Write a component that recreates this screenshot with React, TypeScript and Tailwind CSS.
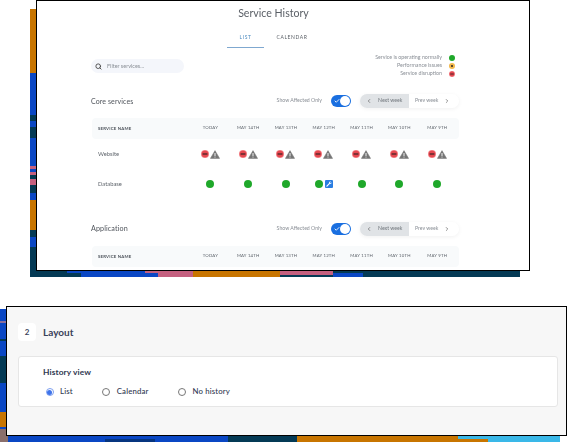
import { Check, ChevronLeft, ChevronRight, Search } from "lucide-react";

const days = ["TODAY", "MAY 14TH", "MAY 13TH", "MAY 12TH", "MAY 11TH", "MAY 10TH", "MAY 9TH"];

const gridCols = "ml-[1px] grid grid-cols-[99.5px_repeat(7,37.8px)]";

function Disrupted({ size = 8 }: { size?: number }) {
  return (
    <svg width={size} height={size} viewBox="0 0 8 8" className="shrink-0">
      <circle cx="4" cy="4" r="4" fill="#f27f85" />
      <circle cx="4" cy="4" r="3.2" fill="#e5474f" />
      <rect x="1.6" y="3.5" width="4.8" height="1" fill="#1c1c1c" />
    </svg>
  );
}

function Warning() {
  return (
    <svg width="10" height="9" viewBox="0 0 10 9" className="shrink-0">
      <path d="M5 .6 9.6 8.4H.4Z" fill="#757575" stroke="#757575" strokeWidth=".5" strokeLinejoin="round" />
      <rect x="4.55" y="3" width=".9" height="3" fill="#fff" />
      <rect x="4.55" y="6.6" width=".9" height=".9" fill="#fff" />
    </svg>
  );
}

function Healthy() {
  return <span className="block h-2 w-2 shrink-0 rounded-full bg-[#1fa82a]" />;
}

function Maintenance() {
  return (
    <svg width="8" height="8" viewBox="0 0 8 8" className="shrink-0">
      <rect width="8" height="8" rx="1" fill="#2a7de1" />
      <path d="M1.9 6.1 4.6 3.4" stroke="#fff" strokeWidth="1.2" strokeLinecap="round" />
      <path d="M4 2.9A1.5 1.5 0 0 1 5.9 1.6L4.9 2.7 5.4 3.2 6.5 2.2A1.5 1.5 0 0 1 5.2 4.1Z" fill="#fff" />
    </svg>
  );
}

function Controls() {
  return (
    <div className="flex items-center">
      <span className="text-[5.2px] text-[#8a8f96]">Show Affected Only</span>
      <span className="ml-[9px] flex h-3 w-5 items-center justify-between rounded-full bg-[#1a6fe0] pl-[3px] pr-[1px]">
        <Check size={6} color="#fff" strokeWidth={3.5} />
        <span className="h-[10px] w-[10px] rounded-full bg-white" />
      </span>
      <div className="ml-[9px] flex h-[14px] w-[99px] rounded-full bg-white shadow-[0_1px_4px_rgba(0,0,0,0.06)]">
        <div className="flex w-[49px] items-center rounded-l-full bg-[#e0e3e6] pl-[6px] text-[5.2px] text-[#71777d]">
          <ChevronLeft size={6} color="#555" strokeWidth={2.5} />
          <span className="ml-[6px]">Next week</span>
        </div>
        <div className="flex flex-1 items-center pl-[6px] text-[5.2px] text-[#8a8f96]">
          <span>Prev week</span>
          <ChevronRight size={6} color="#555" strokeWidth={2.5} className="ml-[6px]" />
        </div>
      </div>
    </div>
  );
}

function TableHead() {
  return (
    <div className={`${gridCols} h-[21px] items-center rounded-sm bg-[#f8fafb] text-[4.3px] tracking-[0.2px] text-[#5d636b]`}>
      <span className="pl-[6px] pt-[1px] font-bold text-[#4c525a]">SERVICE NAME</span>
      {days.map((d) => (
        <span key={d} className="text-center">
          {d}
        </span>
      ))}
    </div>
  );
}

function TableRow({ name, cell }: { name: string; cell: (i: number) => React.ReactNode }) {
  return (
    <div className={`${gridCols} h-[30px] items-center`}>
      <span className="pl-[6px] text-[5.8px] text-[#5f656c]">{name}</span>
      {days.map((d, i) => (
        <div key={d} className="flex items-center justify-center">
          {cell(i)}
        </div>
      ))}
    </div>
  );
}

function Radio({ label, checked }: { label: string; checked?: boolean }) {
  return (
    <label className="flex items-center gap-[6.5px]">
      <span
        className={`flex h-2 w-2 items-center justify-center rounded-full border-[0.8px] bg-white ${
          checked ? "border-[#7d9ff0]" : "border-[#777]"
        }`}
      >
        {checked && <span className="h-[5px] w-[5px] rounded-full bg-[#3f74ea]" />}
      </span>
      <span className="text-[7.8px] font-medium tracking-[0.15px] text-[#2f3850]">{label}</span>
    </label>
  );
}

function TopArt() {
  return (
    <svg className="absolute inset-0" width="490" height="268" viewBox="0 0 490 268" shapeRendering="crispEdges">
      <rect width="490" height="268" fill="#043a55" />
      <rect y="0" width="8" height="64" fill="#c87500" />
      <rect y="64" width="8" height="42" fill="#0a47c4" />
      <rect y="112" width="8" height="6" fill="#0a47c4" />
      <rect y="129" width="8" height="37" fill="#0a47c4" />
      <rect y="157" width="8" height="3" fill="#c4607f" />
      <rect y="163" width="8" height="3" fill="#c4607f" />
      <rect y="170" width="8" height="6" fill="#c4607f" />
      <rect y="184" width="8" height="7" fill="#0a47c4" />
      <rect y="191" width="8" height="30" fill="#c87500" />
      <rect y="228" width="8" height="10" fill="#0a47c4" />
      <rect x="37" y="260" width="14" height="4" fill="#0a47c4" />
      <rect x="51" y="260" width="77" height="8" fill="#0a47c4" />
      <rect x="115" y="260" width="48" height="4" fill="#c4607f" />
      <rect x="128" y="264" width="35" height="4" fill="#c4607f" />
      <rect x="163" y="260" width="87" height="8" fill="#c87500" />
      <rect x="250" y="260" width="53" height="6" fill="#c4607f" />
      <rect x="303" y="264" width="30" height="4" fill="#0a47c4" />
    </svg>
  );
}

function BottomArt() {
  return (
    <svg className="absolute inset-0" width="560" height="133" viewBox="0 0 560 133" shapeRendering="crispEdges">
      <rect width="560" height="133" fill="#0a47c4" />
      <rect y="47" width="8" height="27" fill="#043a55" />
      <rect y="12" width="8" height="2" fill="#8a6f9c" />
      <rect y="30" width="8" height="2" fill="#043a55" />
      <rect y="103" width="8" height="15" fill="#c87500" />
      <rect y="120" width="8" height="13" fill="#8a6f6c" />
      <rect x="105" y="130" width="50" height="3" fill="#06357f" />
      <rect x="228" y="127" width="69" height="6" fill="#043a55" />
      <rect x="297" y="127" width="191" height="6" fill="#c87500" />
      <rect x="458" y="127" width="102" height="3" fill="#3ab8e8" />
      <rect x="488" y="127" width="72" height="6" fill="#3ab8e8" />
    </svg>
  );
}

export default function App() {
  return (
    <div className="relative h-[442px] w-[567px] overflow-hidden bg-white font-['Lato',sans-serif]">
      <div className="relative ml-[30px] mt-[9px] h-[268px] w-[490px]">
        <TopArt />
        <div className="absolute left-[6px] top-[-9px] h-[271px] w-[494px] overflow-hidden border border-black bg-white">
          <div className="ml-[54px] w-[368px] blur-[0.25px]">
            <h1 className="mt-[5px] pr-[3px] text-center text-[10.6px] leading-[15px] text-[#5a5f66]">Service History</h1>
            <div className="mt-[6px] flex justify-center pr-[3px] text-center text-[5px] tracking-[0.6px]">
              <div className="h-[21px] w-[37px] border-b-[1.5px] border-[#7fa8d0] pt-[6px] leading-[8px] text-[#4f8cc0]">LIST</div>
              <div className="h-[21px] w-[56px] pt-[6px] leading-[8px] text-[#5a5f66]">CALENDAR</div>
            </div>
            <div className="mt-[6px] flex justify-between">
              <div className="mt-[5px] flex h-[14px] w-[93px] items-center rounded-full bg-[#f4f6fb] pl-[4px]">
                <Search size={7} color="#444" strokeWidth={3} />
                <span className="ml-[5px] text-[5.5px] text-[#8a8f96]">Filter services...</span>
              </div>
              <div className="pr-[4px] text-[5.3px] text-[#8a8f96]">
                <div className="flex h-2 items-center justify-end gap-[7px]">
                  Service is operating normally
                  <span className="h-[6px] w-[6px] rounded-full bg-[#1fa82a]" />
                </div>
                <div className="flex h-2 items-center justify-end gap-[7px]">
                  Performance issues
                  <span className="flex h-[6px] w-[6px] items-center justify-center rounded-full bg-[#f2b84b]">
                    <span className="h-[2px] w-[2px] rounded-full bg-[#222]" />
                  </span>
                </div>
                <div className="flex h-2 items-center justify-end gap-[7px]">
                  Service disruption
                  <Disrupted size={6} />
                </div>
              </div>
            </div>

            <div className="mt-[16px] flex h-[14px] items-center justify-between">
              <span className="text-[7px] tracking-[0.1px] text-[#50555c]">Core services</span>
              <Controls />
            </div>
            <div className="mt-[10px]">
              <TableHead />
              <TableRow
                name="Website"
                cell={() => (
                  <div className="flex items-center gap-[1px]">
                    <Disrupted />
                    <Warning />
                  </div>
                )}
              />
              <TableRow
                name="Database"
                cell={(i) =>
                  i === 3 ? (
                    <div className="flex items-center gap-[2px]">
                      <Healthy />
                      <Maintenance />
                    </div>
                  ) : (
                    <Healthy />
                  )
                }
              />
            </div>

            <div className="mt-[23px] flex h-[14px] items-center justify-between">
              <span className="text-[7.2px] tracking-[0.1px] text-[#50555c]">Application</span>
              <Controls />
            </div>
            <div className="mt-[10px]">
              <TableHead />
            </div>
          </div>
        </div>
      </div>

      <div className="relative mt-[32px] h-[133px] w-[560px]">
        <BottomArt />
        <div className="absolute left-[6px] top-[-3px] h-[130px] w-[561px] border border-black bg-[#f7f7f7] pl-[11px] pt-4">
          <div className="flex items-center gap-[7px]">
            <span className="flex h-[18px] w-[18px] items-center justify-center rounded-sm bg-white text-[8px] font-bold text-[#39425a]">
              2
            </span>
            <span className="pt-[1px] text-[10px] font-bold text-[#39425a]">Layout</span>
          </div>
          <div className="mt-[15px] h-[51px] w-[540px] rounded-[3px] border border-[#e6e6e6] bg-white pl-[24px] pt-[10px]">
            <div className="text-[8.4px] font-bold leading-[10px] tracking-[0.1px] text-[#2f3850]">History view</div>
            <div className="ml-[2.5px] mt-[10px] flex h-[10px] items-center gap-[29.5px]">
              <Radio label="List" checked />
              <Radio label="Calendar" />
              <Radio label="No history" />
            </div>
          </div>
        </div>
      </div>
    </div>
  );
}
